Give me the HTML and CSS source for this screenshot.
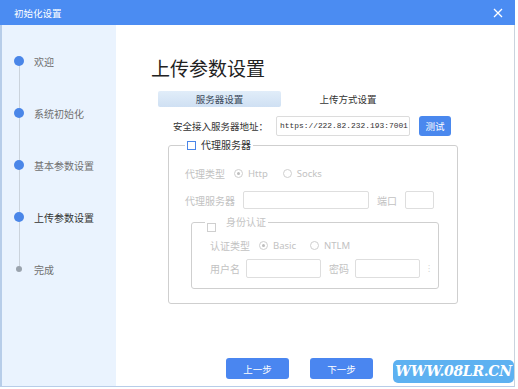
FILE: index.html
```html
<!DOCTYPE html>
<html lang="zh-CN">
<head>
<meta charset="utf-8">
<title>初始化设置</title>
<link rel="stylesheet" href="styles.css">
</head>
<body>
<div class="window">
  <div class="titlebar">
    <span class="title">初始化设置</span>
    <svg class="close" width="10" height="10" viewBox="0 0 10 10"><path d="M1 1L9 9M9 1L1 9" stroke="#fff" stroke-width="1.3" fill="none"/></svg>
  </div>
  <div class="main">
    <div class="sidebar">
      <div class="steps">
        <div class="step"><span class="dot"></span><span class="step-label">欢迎</span></div>
        <div class="step"><span class="dot"></span><span class="step-label">系统初始化</span></div>
        <div class="step"><span class="dot"></span><span class="step-label">基本参数设置</span></div>
        <div class="step active"><span class="dot"></span><span class="step-label">上传参数设置</span></div>
        <div class="step todo"><span class="dot"></span><span class="step-label">完成</span></div>
      </div>
    </div>
    <div class="content">
      <h1 class="heading">上传参数设置</h1>
      <div class="tabs">
        <div class="tab selected">服务器设置</div>
        <div class="tab">上传方式设置</div>
      </div>
      <div class="addr-row">
        <span class="addr-label">安全接入服务器地址：</span>
        <div class="addr-input">https://222.82.232.193:7001</div>
        <button class="btn test">测试</button>
      </div>
      <fieldset class="outer">
        <legend class="legend"><span class="check blue"></span><span class="legend-text">代理服务器</span></legend>
        <div class="row r1">
          <span class="lbl w40">代理类型</span>
          <span class="radio on"></span><span class="opt">Http</span>
          <span class="radio sp"></span><span class="opt">Socks</span>
        </div>
        <div class="row r2">
          <span class="lbl w50">代理服务器</span>
          <span class="field proxy"></span>
          <span class="lbl">端口</span>
          <span class="field port"></span>
        </div>
        <fieldset class="inner">
          <legend class="legend inner-legend"><span class="check gray"></span><span class="legend-text gray-text">身份认证</span></legend>
          <div class="row r3">
            <span class="lbl w40">认证类型</span>
            <span class="radio on"></span><span class="opt">Basic</span>
            <span class="radio sp2"></span><span class="opt">NTLM</span>
          </div>
          <div class="row r4">
            <span class="lbl w30">用户名</span>
            <span class="field user"></span>
            <span class="lbl">密码</span>
            <span class="field pass"></span>
            <span class="mark">⁝</span>
          </div>
        </fieldset>
      </fieldset>
      <div class="nav">
        <button class="btn step-btn">上一步</button>
        <button class="btn step-btn">下一步</button>
      </div>
    </div>
  </div>
  <div class="watermark">WWW.08LR.CN</div>
</div>
</body>
</html>
```

FILE: styles.css
```css
* { box-sizing: border-box; }
html, body { margin: 0; padding: 0; background: #fff; }
body {
  width: 518px; height: 389px; overflow: hidden;
  font-family: "Noto Sans CJK SC", "Noto Sans", sans-serif;
  font-size: 10px; color: #333;
}
.window { position: relative; width: 515px; height: 387px; }
.titlebar {
  height: 25px; background: #4b8cf2;
  display: flex; align-items: center; justify-content: space-between;
  padding: 0 12px 0 14px;
}
.title { color: #fff; font-size: 9.5px; }
.close { display: block; }
.main {
  display: flex; height: 362px;
  border-left: 2px solid #b7cde9; border-bottom: 1px solid #b7cde9; border-right: 1px solid #c9d3de;
}
.sidebar { width: 114px; background: #eaf3fe; }
.steps { position: relative; padding-top: 10px; }
.steps::before {
  content: ""; position: absolute; left: 17px; top: 36px; height: 208px; width: 1px; background: #cbd3dc;
}
.step { position: relative; height: 52px; display: flex; align-items: center; }
.dot {
  width: 10px; height: 10px; border-radius: 50%; background: #4a86e8;
  margin-left: 12px; margin-right: 10px; flex: none;
}
.step.todo .dot { width: 6px; height: 6px; background: #9aa3ad; margin-left: 14px; margin-right: 12px; }
.step-label { font-size: 10px; color: #707070; }
.step.active .step-label { color: #333; }
.content { flex: 1; display: flex; flex-direction: column; padding: 31px 0 0 35px; }
.heading { margin: 0; font-size: 19px; line-height: 24px; font-weight: normal; color: #222; }
.tabs { display: flex; margin: 11px 0 0 7px; height: 16px; }
.tab { font-size: 9.5px; line-height: 16px; text-align: center; width: 134px; color: #333; }
.tab.selected { width: 123px; background: linear-gradient(#e1edf9, #cfe0f3); border-radius: 2px; color: #3b4a5a; }
.addr-row { display: flex; align-items: center; margin: 8px 0 0 22px; height: 21px; }
.addr-label { font-size: 9.5px; width: 103px; color: #333; }
.addr-input {
  width: 134px; height: 20px; border: 1px solid #dcdcdc; border-radius: 2px;
  font-family: "Liberation Mono", monospace; font-size: 7.9px; line-height: 18px;
  padding-left: 3px; white-space: nowrap; overflow: hidden; color: #333;
}
.btn {
  border: none; background: #4a88ee; color: #fff; border-radius: 3px;
  font-family: "Noto Sans CJK SC", sans-serif; padding: 0; cursor: default;
}
.test { width: 32px; height: 20px; margin-left: 9px; font-size: 9.5px; }
fieldset { margin: 0; padding: 0; border: 1px solid #cfcfcf; border-radius: 3px; min-width: 0; }
.outer { width: 290px; margin: 3px 0 0 17px; padding: 0 0 14px 16px; }
.legend { padding: 0 2px; margin-left: 0; display: flex; align-items: center; height: 12px; }
.check { width: 9px; height: 9px; border: 1px solid #4a86e8; display: inline-block; background: #fff; }
.check.gray { border-color: #cfcfcf; margin-top: 10px; }
.legend-text { font-size: 10px; margin-left: 5px; color: #333; line-height: 12px; }
.gray-text { color: #c4c4c4; margin-left: 10px; }
.row { display: flex; align-items: center; height: 18px; }
.r1 { margin-top: 13px; }
.r2 { margin-top: 9px; }
.lbl { font-size: 10px; color: #c2c2c2; flex: none; }
.w40 { width: 49px; }
.w50 { width: 58px; }
.w30 { width: 36px; }
.radio {
  width: 9px; height: 9px; border: 1px solid #cfcfcf; border-radius: 50%; display: inline-block; position: relative; flex: none;
}
.radio.on::after {
  content: ""; position: absolute; left: 2px; top: 2px; width: 3px; height: 3px; border-radius: 50%; background: #bdbdbd;
}
.opt { font-family: "Noto Sans", sans-serif; font-size: 9.5px; color: #c2c2c2; margin-left: 5px; }
.sp { margin-left: 15px; }
.sp2 { margin-left: 14px; }
.field { height: 18px; border: 1px solid #dedede; border-radius: 2px; display: inline-block; flex: none; background: #fff; }
.proxy { width: 126px; margin-right: 8px; }
.port { width: 29px; margin-left: 8px; }
.inner { width: 248px; margin: 7px 0 0 6px; padding: 0 0 10px 18px; }
.inner-legend { margin-left: -5px; }
.r3 { margin-top: 8px; }
.r4 { margin-top: 5px; height: 19px; }
.user { width: 75px; height: 19px; margin-right: 8px; }
.pass { width: 65px; height: 19px; margin-left: 6px; }
.mark { color: #ccc; font-size: 8px; margin-left: 8px; }
.nav { display: flex; gap: 21px; margin: 54px 0 0 75px; }
.step-btn { width: 63px; height: 21px; font-size: 9.5px; background: #4a86f0; }
.watermark {
  position: absolute; left: 393px; top: 360px; width: 121px; height: 23px;
  background: #5db1f1; border-radius: 5px; color: #fff;
  font-family: "DejaVu Serif", serif; font-style: italic; font-weight: bold; font-size: 14px;
  line-height: 23px; text-align: center; letter-spacing: -0.3px;
}
```
